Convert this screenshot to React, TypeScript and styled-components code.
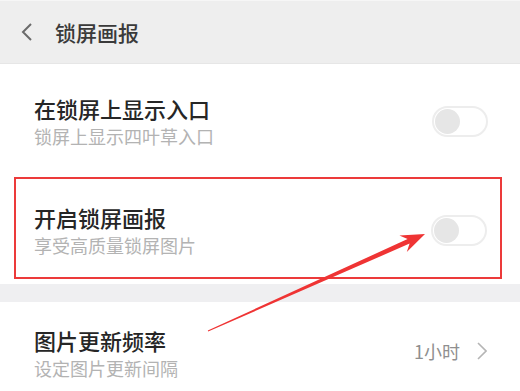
import React from "react";
import styled, { createGlobalStyle } from "styled-components";

const Global = createGlobalStyle`
  html, body { margin: 0; padding: 0; background: #ffffff; }
  body { font-family: "Noto Sans CJK SC", "Noto Sans", sans-serif; }
`;

const Page = styled.div`
  position: relative;
  width: 520px;
  height: 391px;
  overflow: hidden;
  background: #ffffff;
`;

const Header = styled.header`
  height: 64px;
  box-sizing: border-box;
  background: #eeeeee;
  border-top: 1px solid #f6f6f6;
  border-bottom: 1px solid #e6e6e6;
  display: flex;
  align-items: center;
  padding-left: 21px;
  gap: 22px;
`;

const HeaderTitle = styled.h1`
  margin: 0;
  font-size: 21px;
  font-weight: 500;
  line-height: 26px;
  color: #3a3a3a;
`;

const Row = styled.div<{ $pt: number; $pb: number; $pr: number }>`
  display: flex;
  align-items: center;
  justify-content: space-between;
  padding: ${(p) => p.$pt}px ${(p) => p.$pr}px ${(p) => p.$pb}px 34px;
`;

const Highlight = styled.div`
  margin: 0 18px 0 14px;
  border: 2px solid #ec3a3a;
  display: flex;
  align-items: center;
  justify-content: space-between;
  padding: 25px 13px 21px 18px;
`;

const TextCol = styled.div`
  display: flex;
  flex-direction: column;
  gap: 4px;
`;

const Title = styled.div`
  font-size: 22px;
  line-height: 26px;
  font-weight: 500;
  color: #262626;
`;

const Sub = styled.div`
  font-size: 18px;
  line-height: 22px;
  color: #b3b3b3;
`;

const Toggle = styled.div`
  width: 56px;
  height: 31px;
  box-sizing: border-box;
  border: 2px solid #ededed;
  border-radius: 16px;
  background: #ffffff;
  display: flex;
  align-items: center;
  padding-left: 1px;
`;

const Knob = styled.div`
  width: 25px;
  height: 25px;
  border-radius: 50%;
  background: #e6e6e6;
`;

const Gap = styled.div`
  height: 18px;
  margin-top: 5px;
  background: #efeff1;
`;

const ValueWrap = styled.div`
  display: flex;
  align-items: center;
  gap: 17px;
  margin-top: -4px;
`;

const Value = styled.span`
  font-size: 18px;
  line-height: 22px;
  color: #8f8f8f;
`;

const Overlay = styled.svg`
  position: absolute;
  left: 0;
  top: 0;
  pointer-events: none;
`;

export default function App() {
  return (
    <>
      <Global />
      <Page>
        <Header>
          <svg width="12" height="20" viewBox="0 0 12 20">
            <polyline points="10,2 2,10 10,18" fill="none" stroke="#6a6a6a" strokeWidth="2" />
          </svg>
          <HeaderTitle>锁屏画报</HeaderTitle>
        </Header>

        <Row $pt={31} $pb={30} $pr={32}>
          <TextCol>
            <Title>在锁屏上显示入口</Title>
            <Sub>锁屏上显示四叶草入口</Sub>
          </TextCol>
          <Toggle><Knob /></Toggle>
        </Row>

        <Highlight>
          <TextCol>
            <Title>开启锁屏画报</Title>
            <Sub>享受高质量锁屏图片</Sub>
          </TextCol>
          <Toggle><Knob /></Toggle>
        </Highlight>

        <Gap />

        <Row $pt={25} $pb={12} $pr={33}>
          <TextCol>
            <Title>图片更新频率</Title>
            <Sub>设定图片更新间隔</Sub>
          </TextCol>
          <ValueWrap>
            <Value>1小时</Value>
            <svg width="10" height="18" viewBox="0 0 10 18">
              <polyline points="1,1 9,9 1,17" fill="none" stroke="#b5b5b5" strokeWidth="1.6" />
            </svg>
          </ValueWrap>
        </Row>

        <Overlay width="520" height="391" viewBox="0 0 520 391">
          <polygon
            points="207.8,330.5 407.6,239.0 399.4,235.6 425,234 406.8,252.0 409.6,243.6 208.2,331.5"
            fill="#ef3434"
          />
        </Overlay>
      </Page>
    </>
  );
}
